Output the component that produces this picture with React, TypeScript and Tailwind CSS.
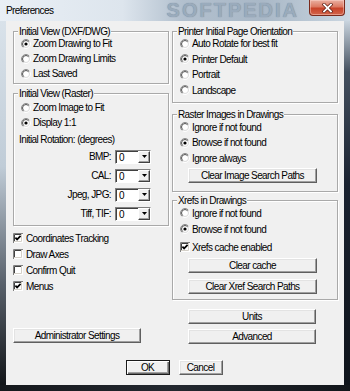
import React from "react";

const Radio = ({ checked }: { checked?: boolean }) => (
  <svg width="10" height="10" viewBox="0 0 10 10" className="shrink-0">
    <defs>
      <linearGradient id="rgo" x1="0" y1="0" x2="1" y2="1">
        <stop offset="0.45" stopColor="#8a8a8a" />
        <stop offset="0.6" stopColor="#ffffff" />
      </linearGradient>
      <linearGradient id="rgi" x1="0" y1="0" x2="1" y2="1">
        <stop offset="0.45" stopColor="#505050" />
        <stop offset="0.6" stopColor="#dcdcdc" />
      </linearGradient>
    </defs>
    <circle cx="5" cy="5" r="4.5" fill="none" stroke="url(#rgo)" strokeWidth="1" />
    <circle cx="5" cy="5" r="3.5" fill="#fff" stroke="url(#rgi)" strokeWidth="1" />
    {checked && <circle cx="5" cy="5" r="1.6" fill="#000" />}
  </svg>
);

const Check = ({ checked }: { checked?: boolean }) => (
  <svg width="10" height="10" viewBox="0 0 10 10" className="shrink-0">
    <rect x="0" y="0" width="10" height="10" fill="#fff" />
    <path d="M0.5 10V0.5H10" stroke="#808080" fill="none" />
    <path d="M1.5 9V1.5H9" stroke="#404040" fill="none" />
    <path d="M1 8.5H8.5V1" stroke="#d4d0c8" fill="none" />
    {checked && (
      <path d="M2.4 4.6L4.1 6.4L7.6 2.8" stroke="#000" strokeWidth="1.7" fill="none" />
    )}
  </svg>
);

const RadioRow = ({
  label,
  checked,
  h = "h-[15px]",
}: {
  label: string;
  checked?: boolean;
  h?: string;
}) => (
  <div className={`flex items-center ${h}`}>
    <div className="ml-[7px] flex">
      <Radio checked={checked} />
    </div>
    <span className="ml-[2px] leading-[11px]">{label}</span>
  </div>
);

const CheckRow = ({
  label,
  checked,
  ml = "ml-0",
  gap = "ml-[3px]",
  h = "h-[16px]",
}: {
  label: string;
  checked?: boolean;
  ml?: string;
  gap?: string;
  h?: string;
}) => (
  <div className={`flex items-center ${h}`}>
    <div className={`${ml} flex`}>
      <Check checked={checked} />
    </div>
    <span className={`${gap} leading-[11px]`}>{label}</span>
  </div>
);

const Group = ({
  title,
  className = "",
  children,
}: {
  title: string;
  className?: string;
  children?: React.ReactNode;
}) => (
  <div
    className={`relative border border-[#a9a9a9] shadow-[inset_1px_1px_0_#ffffff,1px_1px_0_#ffffff] ${className}`}
  >
    <span className="absolute -top-[6px] left-[4px] bg-[#f0f0f0] px-[1px] leading-[11px] whitespace-nowrap">
      {title}
    </span>
    {children}
  </div>
);

const Btn = ({
  children,
  className = "",
  def,
}: {
  children: React.ReactNode;
  className?: string;
  def?: boolean;
}) => (
  <div
    className={`h-[15px] flex items-center justify-center bg-[#f0f0f0] leading-[11px] whitespace-nowrap ${
      def
        ? "border border-[#1a1a1a] shadow-[inset_1px_1px_0_#ffffff,inset_-1px_-1px_0_#696969,inset_-2px_-2px_0_#a0a0a0]"
        : "border border-t-[#ffffff] border-l-[#ffffff] border-r-[#5f5f5f] border-b-[#5f5f5f] shadow-[inset_-1px_-1px_0_#a0a0a0,inset_1px_1px_0_#e3e3e3]"
    } ${className}`}
  >
    {children}
  </div>
);

const Combo = () => (
  <div className="w-[36px] h-[14px] flex bg-white border border-t-[#808080] border-l-[#808080] border-r-[#ffffff] border-b-[#ffffff] shadow-[inset_1px_1px_0_#404040]">
    <span className="flex-1 pl-[3px] pt-[1px] leading-[11px]">0</span>
    <div className="w-[12px] h-[12px] flex items-center justify-center bg-[#f0f0f0] border border-t-[#ffffff] border-l-[#ffffff] border-r-[#404040] border-b-[#404040] shadow-[inset_-1px_-1px_0_#a0a0a0]">
      <svg width="5" height="3" viewBox="0 0 5 3">
        <path d="M0 0H5L2.5 3Z" fill="#000" />
      </svg>
    </div>
  </div>
);

const ComboRow = ({ label }: { label: string }) => (
  <div className="h-[19px] flex items-center justify-end pr-[17px]">
    <span className="mr-[4px] leading-[11px]">{label}</span>
    <Combo />
  </div>
);

const CloseBtn = () => (
  <div className="mr-[5px] w-[36px] h-[16px] shrink-0 flex items-center justify-center rounded-b-[4px] border border-t-0 border-[#7a2a1c] bg-[linear-gradient(180deg,#eab0a2_0%,#dc7a63_45%,#c8432a_55%,#d2654a_100%)] shadow-[inset_0_0_0_1px_rgba(255,220,210,0.45)]">
    <svg width="11" height="10" viewBox="0 0 11 10">
      <path d="M2 1.5L9 8.5M9 1.5L2 8.5" stroke="#5a1a10" strokeWidth="3.2" strokeLinecap="square" />
      <path d="M2 1.5L9 8.5M9 1.5L2 8.5" stroke="#ffffff" strokeWidth="1.8" strokeLinecap="square" />
    </svg>
  </div>
);

export default function App() {
  return (
    <div className="w-[350px] h-[391px] flex flex-col overflow-hidden font-['Liberation_Sans',Arial,sans-serif] text-[10px] tracking-[-0.6px] text-black select-none">
      {/* title bar */}
      <div className="h-[21px] shrink-0 flex items-start overflow-hidden bg-[linear-gradient(90deg,#e9eff5_0%,#dde5ed_35%,#b2c0ce_52%,#a9b8c7_75%,#bfccd8_92%,#cdd8e2_100%)]">
        <span className="ml-[6px] mt-[5px] leading-[11px]">Preferences</span>
        <span className="ml-auto mr-[10px] mt-0 text-[20px] font-bold tracking-[2px] leading-[20px] text-[#9aabbc] [text-shadow:0_0_1px_#6d7f92]">
          SOFTPEDIA
        </span>
        <CloseBtn />
      </div>

      <div className="flex flex-1 min-h-0">
        <div className="w-[6px] shrink-0 bg-[linear-gradient(180deg,#d9e2ea_0%,#c0ccd7_40%,#59616b_72%,#121519_100%)]" />

        {/* client area */}
        <div className="flex-1 bg-[#f0f0f0] flex flex-col pl-[7px] pr-[6px] pt-[10px]">
          <div className="flex gap-[3px]">
            {/* left column */}
            <div className="w-[156px] flex flex-col">
              <Group title="Initial View (DXF/DWG)" className="pt-[4px] pb-[2px]">
                <RadioRow label="Zoom Drawing to Fit" checked />
                <RadioRow label="Zoom Drawing Limits" />
                <RadioRow label="Last Saved" />
              </Group>

              <Group title="Initial View (Raster)" className="mt-[9px] pt-[6px] pb-[2px]">
                <RadioRow label="Zoom Image to Fit" />
                <RadioRow label="Display 1:1" checked />
                <div className="mt-[2px] h-[15px] flex items-center pl-[5px] leading-[11px]">
                  Initial Rotation: (degrees)
                </div>
                <ComboRow label="BMP:" />
                <ComboRow label="CAL:" />
                <ComboRow label="Jpeg, JPG:" />
                <ComboRow label="Tiff, TIF:" />
              </Group>

              <div className="mt-[4px] flex flex-col">
                <CheckRow label="Coordinates Tracking" checked />
                <CheckRow label="Draw Axes" />
                <CheckRow label="Confirm Quit" />
                <CheckRow label="Menus" checked />
              </div>

              <Btn className="mt-[34px] w-[128px]">Administrator Settings</Btn>
            </div>

            {/* right column */}
            <div className="w-[166px] flex flex-col">
              <Group title="Printer Initial Page Orientation" className="pt-[4px] pb-[4px]">
                <RadioRow label="Auto Rotate for best fit" h="h-[15.5px]" />
                <RadioRow label="Printer Default" checked h="h-[15.5px]" />
                <RadioRow label="Portrait" h="h-[15.5px]" />
                <RadioRow label="Landscape" h="h-[15.5px]" />
              </Group>

              <Group title="Raster Images in Drawings" className="mt-[11px] pt-[4px] pb-[8px]">
                <RadioRow label="Ignore if not found" h="h-[16px]" />
                <RadioRow label="Browse if not found" checked h="h-[15px]" />
                <RadioRow label="Ignore always" h="h-[16px]" />
                <Btn className="mt-[2px] ml-[15px] w-[129px]">Clear Image Search Paths</Btn>
              </Group>

              <Group title="Xrefs in Drawings" className="mt-[8px] pt-[4px] pb-[5px]">
                <RadioRow label="Ignore if not found" h="h-[16px]" />
                <RadioRow label="Browse if not found" checked h="h-[16px]" />
                <div className="mt-[2px]">
                  <CheckRow label="Xrefs cache enabled" checked ml="ml-[7px]" gap="ml-[2px]" />
                </div>
                <Btn className="mt-[3px] ml-[15px] w-[129px]">Clear cache</Btn>
                <Btn className="mt-[6px] ml-[15px] w-[129px]">Clear Xref Search Paths</Btn>
              </Group>

              <Btn className="mt-[9px] ml-[16px] w-[128px]">Units</Btn>
              <Btn className="mt-[5px] ml-[16px] w-[128px]">Advanced</Btn>
            </div>
          </div>

          <div className="mt-[16px] flex justify-center gap-[9px] pl-[1px] pr-[4px]">
            <Btn def className="w-[44px]">OK</Btn>
            <Btn className="w-[44px]">Cancel</Btn>
          </div>
        </div>

        <div className="w-[6px] shrink-0 bg-[linear-gradient(180deg,#c9d4de_0%,#44505f_14%,#1a2230_45%,#0f141b_100%)]" />
      </div>
      <div className="h-[6px] shrink-0 bg-[linear-gradient(90deg,#15181c_0%,#23282f_50%,#12161b_100%)]" />
    </div>
  );
}
